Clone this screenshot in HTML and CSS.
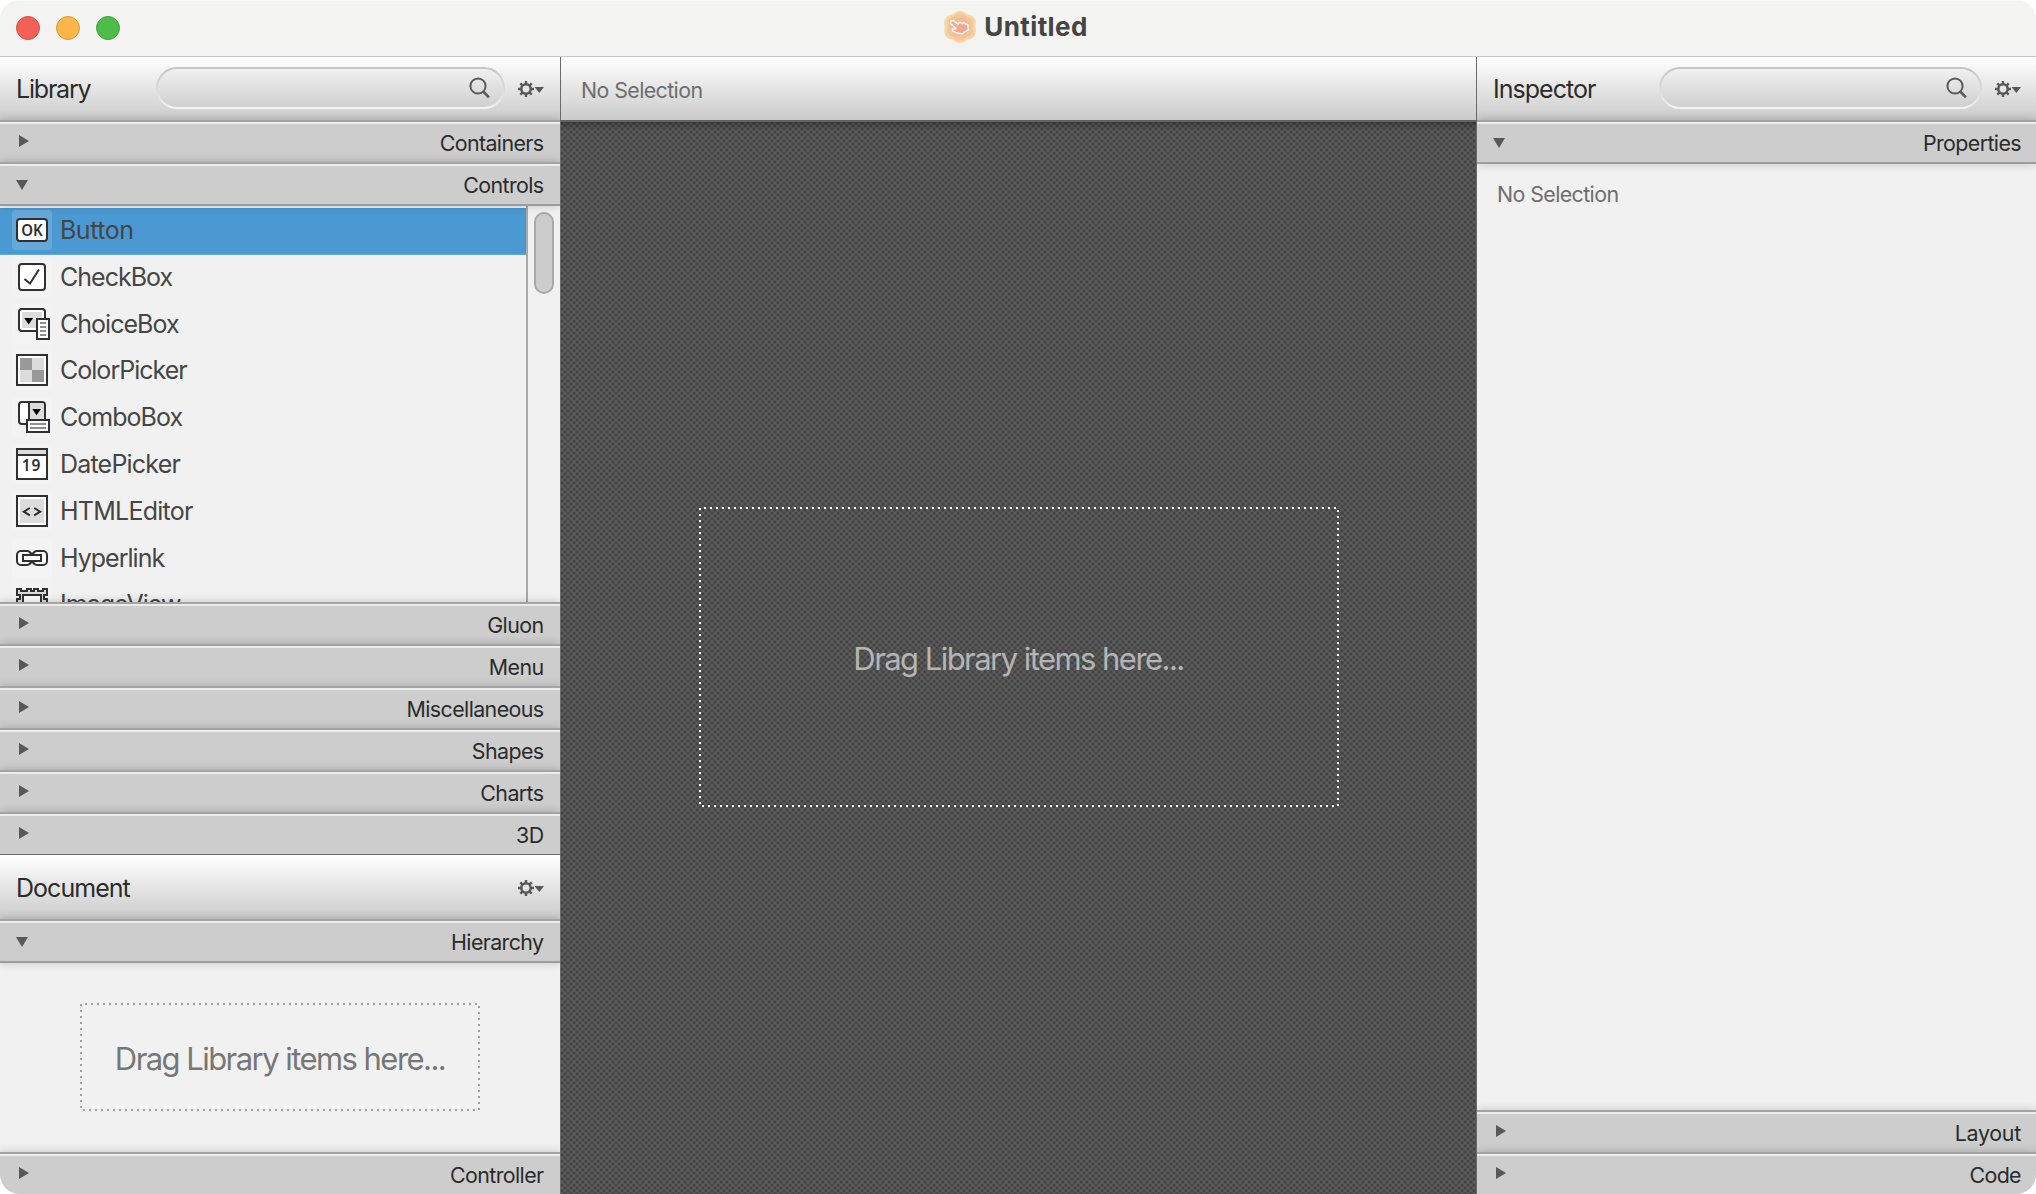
FILE: index.html
```
<!DOCTYPE html>
<html lang="en">
<head>
<meta charset="utf-8">
<title>Untitled</title>
<link rel="stylesheet" href="styles.css">
</head>
<body>
<svg class="defs" aria-hidden="true">
  <symbol id="gear" viewBox="0 0 26 16">
    <circle cx="8" cy="8" r="4.7" fill="none" stroke="#585858" stroke-width="2.5"/>
    <path d="M8 0v3M8 13v3M0 8h3M13 8h3M2.3 2.3l2 2M11.7 11.7l2 2M13.7 2.3l-2 2M2.3 13.7l2-2" stroke="#585858" stroke-width="2.4"/>
    <path d="M16.5 6h9.5l-4.7 6z" fill="#585858"/>
  </symbol>
  <symbol id="search" viewBox="0 0 22 22">
    <circle cx="9" cy="9" r="7.6" fill="none" stroke="#5a5a5a" stroke-width="2"/>
    <path d="M14.3 14.5l5.6 5.8" stroke="#5a5a5a" stroke-width="2.6"/>
  </symbol>
  <symbol id="closed" viewBox="0 0 10 12"><path d="M0 0l10 6-10 6z" fill="#585858"/></symbol>
  <symbol id="open" viewBox="0 0 12 10"><path d="M0 0h12l-6 10z" fill="#585858"/></symbol>
</svg>
<div class="window">
  <header class="titlebar">
    <div class="lights"><i class="light red"></i><i class="light amber"></i><i class="light green"></i></div>
    <div class="title">
      <svg class="app-icon" viewBox="0 0 32 32">
        <g fill="#f6d6a3"><circle cx="16" cy="8" r="8"/><circle cx="16" cy="24" r="8"/><circle cx="9" cy="12" r="8.800"/><circle cx="23" cy="12" r="8.800"/><circle cx="9" cy="20" r="8.800"/><circle cx="23" cy="20" r="8.800"/></g>
        <g fill="#f1b592" fill-opacity=".45"><ellipse cx="16" cy="16" rx="9" ry="14"/><ellipse cx="16" cy="16" rx="9" ry="14" transform="rotate(60 16 16)"/><ellipse cx="16" cy="16" rx="9" ry="14" transform="rotate(120 16 16)"/></g>
        <path d="M6.500 12.500L7 10l2.500-.5 4.600 4 .8-2 2.300.2 1 1 1.500-1 1.900 1.400 2.200.5.700 5.200-7 4.300-5.500-1.500-3.500-1.600-.2-2 3.900-.3z" fill="#f0a690" stroke="#fff6ee" stroke-width="1.600" stroke-linejoin="round"/>
      </svg>
      <span>Untitled</span>
    </div>
  </header>
  <main class="columns">
    <aside class="side left">
      <div class="bar">
        <h2 class="name library">Library</h2>
        <div class="search"><svg><use href="#search"/></svg></div>
        <svg class="gear"><use href="#gear"/></svg>
      </div>
      <div class="section"><svg class="closed"><use href="#closed"/></svg><span>Containers</span></div>
      <div class="section expanded"><svg class="open"><use href="#open"/></svg><span>Controls</span></div>
      <div class="list">
        <ul class="items">
          <li class="item selected"><svg viewBox="0 0 40 40"><rect x="5" y="9" width="30" height="22" rx="3" class="ol"/><text x="9.200" y="25.700" textLength="21.500" lengthAdjust="spacingAndGlyphs">OK</text></svg><span class="button-label">Button</span></li>
          <li class="item"><svg viewBox="0 0 40 40"><rect x="7" y="7" width="26" height="26" rx="3" class="ol"/><path d="M12.500 22l5.500 4.500 9-14" class="ln"/></svg><span>CheckBox</span></li>
          <li class="item"><svg viewBox="0 0 40 40"><rect x="7" y="5" width="26" height="22" rx="3" class="ol"/><path d="M10 8h20v16H10z" class="pale"/><path d="M12.300 14h8.800l-4.400 6.500z"/><path d="M25 15h12v20H25z" class="ol"/><path d="M28 19h6M28 23h6M28 27h6M28 31h6" class="gl"/></svg><span>ChoiceBox</span></li>
          <li class="item"><svg viewBox="0 0 40 40"><path d="M5 5h30v30H5z" class="ol"/><path d="M8 8h24v24H8z" class="pale"/><path d="M8 8h12v12H8zM20 20h12v12H20z" class="mid"/></svg><span>ColorPicker</span></li>
          <li class="item"><svg viewBox="0 0 40 40"><rect x="7" y="5" width="26" height="22" rx="3" class="ol"/><path d="M18 6h13l1 1v19H18z" class="pale"/><path d="M17 5v22" class="ln"/><path d="M20.300 12h8.600l-4.300 6.300z"/><path d="M15 23h22v12H15z" class="ol"/><path d="M18 27h16M18 31h16" class="gl"/></svg><span>ComboBox</span></li>
          <li class="item"><svg viewBox="0 0 40 40"><path d="M5 5h30v30H5z" class="ol"/><path d="M6 6h28v4H6z" class="pale"/><path d="M5 11h30" class="ln"/><text x="9.800" y="27.300" textLength="18.500">19</text></svg><span class="date-label">DatePicker</span></li>
          <li class="item"><svg viewBox="0 0 40 40"><path d="M5 5h30v30H5z" class="ol"/><path d="M8 8h24v24H8z" class="pale"/><path d="M17.800 17l-6 3.700 6 3.700M22.200 17l6 3.700-6 3.700" class="ln"/></svg><span class="html-label">HTMLEditor</span></li>
          <li class="item"><svg viewBox="0 0 40 40"><rect x="5" y="13" width="14" height="14" rx="4" class="ol"/><rect x="21" y="13" width="14" height="14" rx="4" class="ol"/><path d="M17 14l3 3 3-3v12l-3-2-3 2z" fill="#fff"/><path d="M17 14l3 2 3-2M17 26l3-2 3 2" class="ln"/><path d="M11 17h18v6H11z" class="ol"/></svg><span>Hyperlink</span></li>
          <li class="item"><svg viewBox="0 0 40 40"><path d="M5 5h4v2h6V5h4v2h3V5h4v2h5V5h4v6h-3v4h3v20H5V15h3v-4H5z" class="ol pale"/><path d="M11 11h18v20H11z" class="ol"/></svg><span>ImageView</span></li>
        </ul>
        <div class="scrollbar"><div class="thumb"></div></div>
      </div>
      <div class="section"><svg class="closed"><use href="#closed"/></svg><span>Gluon</span></div>
      <div class="section"><svg class="closed"><use href="#closed"/></svg><span>Menu</span></div>
      <div class="section"><svg class="closed"><use href="#closed"/></svg><span>Miscellaneous</span></div>
      <div class="section"><svg class="closed"><use href="#closed"/></svg><span>Shapes</span></div>
      <div class="section"><svg class="closed"><use href="#closed"/></svg><span>Charts</span></div>
      <div class="section"><svg class="closed"><use href="#closed"/></svg><span>3D</span></div>
      <div class="bar document">
        <h2 class="name">Document</h2>
        <svg class="gear"><use href="#gear"/></svg>
      </div>
      <div class="section expanded"><svg class="open"><use href="#open"/></svg><span>Hierarchy</span></div>
      <div class="hierarchy">
        <div class="drop small">
          <svg class="dots"><rect x="1" y="1" width="398" height="106"/></svg>
          <span>Drag Library items here...</span>
        </div>
      </div>
      <div class="section"><svg class="closed"><use href="#closed"/></svg><span>Controller</span></div>
    </aside>
    <section class="center">
      <div class="bar crumbs"><span class="muted">No Selection</span></div>
      <div class="canvas">
        <div class="drop large">
          <svg class="dots"><rect x="1" y="1" width="638" height="298"/></svg>
          <span>Drag Library items here...</span>
        </div>
      </div>
    </section>
    <aside class="side right">
      <div class="bar">
        <h2 class="name">Inspector</h2>
        <div class="search"><svg><use href="#search"/></svg></div>
        <svg class="gear"><use href="#gear"/></svg>
      </div>
      <div class="section expanded"><svg class="open"><use href="#open"/></svg><span>Properties</span></div>
      <div class="properties"><span class="muted">No Selection</span></div>
      <div class="section"><svg class="closed"><use href="#closed"/></svg><span class="layout-label">Layout</span></div>
      <div class="section"><svg class="closed"><use href="#closed"/></svg><span>Code</span></div>
    </aside>
  </main>
</div>
</body>
</html>
```
FILE: styles.css
```
* { box-sizing: border-box; }
body {
  margin: 0;
  background: #fff;
  font-family: "Inter", "Liberation Sans", sans-serif;
  font-size: 21.4px;
  letter-spacing: -0.6px;
  color: #2b2b2b;
}
.defs { display: none; }
svg { display: block; flex: none; }
.window {
  width: 2036px;
  height: 1194px;
  display: flex;
  flex-direction: column;
  overflow: hidden;
  border-radius: 20px;
  background: #f1f1f1;
}

/* Title bar */
.titlebar {
  height: 57px;
  flex: none;
  display: grid;
  grid-template-columns: 1fr auto 1fr;
  align-items: center;
  background: #f3f3f1;
  border-bottom: 1px solid #c9c9c9;
  box-shadow: inset 0 1px 0 #fbfbfb;
}
.lights { display: flex; gap: 16px; padding-left: 16px; }
.light { width: 24px; height: 24px; border-radius: 50%; border: 1px solid; }
.red { background: #f36055; border-color: #d94f45; }
.amber { background: #fab648; border-color: #d99a39; }
.green { background: #4dbc4a; border-color: #3fa33c; }
.title {
  display: flex;
  align-items: center;
  gap: 8px;
  padding: 0 0 3px 0;
  margin-right: 4px;
  font-size: 26px;
  font-weight: 700;
  letter-spacing: 0.4px;
  color: #444;
}
.app-icon { width: 32px; height: 32px; }

/* Columns */
.columns {
  flex: 1;
  min-height: 0;
  display: grid;
  grid-template-columns: 561px 915px 560px;
}
.side, .center { display: flex; flex-direction: column; min-height: 0; overflow: hidden; }
.left { border-right: 1px solid #6a6a6a; }
.right { border-left: 1px solid #6a6a6a; }
.bar {
  height: 63px;
  flex: none;
  display: flex;
  align-items: center;
  padding: 0 16px;
  background: linear-gradient(#fff, #cbcbcb);
}
.name {
  margin: 0;
  font-size: 25px;
  font-weight: 400;
  letter-spacing: -0.97px;
}
.library { letter-spacing: -1.2px; }
.gear { width: 26px; height: 16px; margin-left: auto; }
.right .bar { padding-right: 15px; }
.search {
  width: 349px;
  height: 42px;
  margin: 0 0 1px auto;
  display: flex;
  align-items: center;
  justify-content: flex-end;
  padding-right: 12.5px;
  border-radius: 21px;
  border: 2px solid transparent;
  background:
    linear-gradient(#f0f0f0, #d0d0d0) padding-box,
    linear-gradient(#c3c3c3, #dadada 50%, #f4f4f4) border-box;
}
.right .search { width: 323px; }
.search svg { width: 22px; height: 22px; }
.search + .gear { margin-left: 13px; }
.document {
  height: 65px;
  border-top: 1px solid #6c6c6c;
  position: relative;
  z-index: 1;
  padding-top: 2px;
}
.muted { color: #6e6e6e; }

/* Accordion headers */
.section {
  height: 42px;
  flex: none;
  display: flex;
  align-items: center;
  justify-content: space-between;
  padding: 2px 16.5px 0 19px;
  border-top: 2px solid #a3a3a3;
  background: linear-gradient(#ececec 2px, #cdcdcd 2px);
  box-shadow: 0 0 9px rgba(0, 0, 0, 0.2);
}
.closed { width: 10px; height: 12px; margin-bottom: 4px; }
.open { width: 12px; height: 10px; margin-left: -3px; }
.expanded {
  height: 44px;
  border-bottom: 2px solid #9c9c9c;
  position: relative;
  z-index: 1;
}
.right .section { padding-right: 15px; }
.layout-label { letter-spacing: -0.25px; }

/* Library list */
.list { height: 396px; flex: none; display: flex; overflow: hidden; background: #f1f1f1; }
.items {
  flex: 1;
  margin: 0;
  padding: 2px 0 0;
  list-style: none;
  font-size: 25px;
  letter-spacing: -0.98px;
  color: #454545;
}
.item {
  height: 46.8px;
  display: flex;
  align-items: flex-start;
  gap: 8px;
  padding: 2px 0 0 12px;
  line-height: 40px;
}
.item svg { width: 40px; height: 40px; border-radius: 3px; background: rgba(255, 255, 255, 0.15); }
.selected { background: #4a99d3; border-bottom: 1px solid #60a6da; }
.button-label { letter-spacing: -0.5px; }
.date-label { letter-spacing: -0.8px; }
.html-label { letter-spacing: -0.75px; }
.ol { fill: #fff; stroke: #303030; stroke-width: 2; }
.ln { fill: none; stroke: #303030; stroke-width: 2; }
.gl { fill: none; stroke: #8f8f8f; stroke-width: 2; }
.pale { fill: #dcdcdc; }
.mid { fill: #999; }
.item text {
  font-family: "Noto Sans", "Open Sans", sans-serif;
  font-size: 15.5px;
  font-weight: 600;
  letter-spacing: 0;
  fill: #303030;
}
.scrollbar { width: 34px; border-left: 2px solid #a8a8a8; padding: 6px 0 0 6px; }
.thumb { width: 20px; height: 82px; border-radius: 10px; background: #ccc; border: 2px solid #a8a8a8; }

/* Drop targets */
.hierarchy { flex: 1; min-height: 0; padding-top: 40px; display: flex; justify-content: center; align-items: flex-start; }
.drop {
  display: grid;
  place-items: center;
  font-size: 31px;
  letter-spacing: -1.55px;
}
.drop > * { grid-area: 1 / 1; }
.small { width: 400px; height: 108px; color: #777; }
.large { width: 640px; height: 300px; color: #b5b5b5; }
.drop span { padding-top: 2px; }
.dots { width: 100%; height: 100%; }
.dots rect { fill: none; stroke-width: 2; stroke-dasharray: 2 4; stroke-dashoffset: 2; }
.small rect { stroke: #a0a0a0; }
.large rect { stroke: #fff; }

/* Editor canvas */
.crumbs { padding: 3px 20px 0; }
.canvas {
  flex: 1;
  display: flex;
  align-items: center;
  justify-content: center;
  padding-bottom: 2px;
  border-top: 2px solid #626262;
  background:
    linear-gradient(rgba(0, 0, 0, 0.25), transparent 8px),
    url("data:image/svg+xml,%3Csvg xmlns='http://www.w3.org/2000/svg' width='6' height='6'%3E%3Crect width='6' height='6' fill='%23515151'/%3E%3Cpath d='M0 0h2v2H0zM3 3h2v2H3z' fill='%23424242'/%3E%3Cpath d='M3 0h2v2H3zM0 3h2v2H0z' fill='%235c5c5c'/%3E%3C/svg%3E");
}

/* Inspector */
.properties { flex: 1; padding: 17px 20px; }
```
